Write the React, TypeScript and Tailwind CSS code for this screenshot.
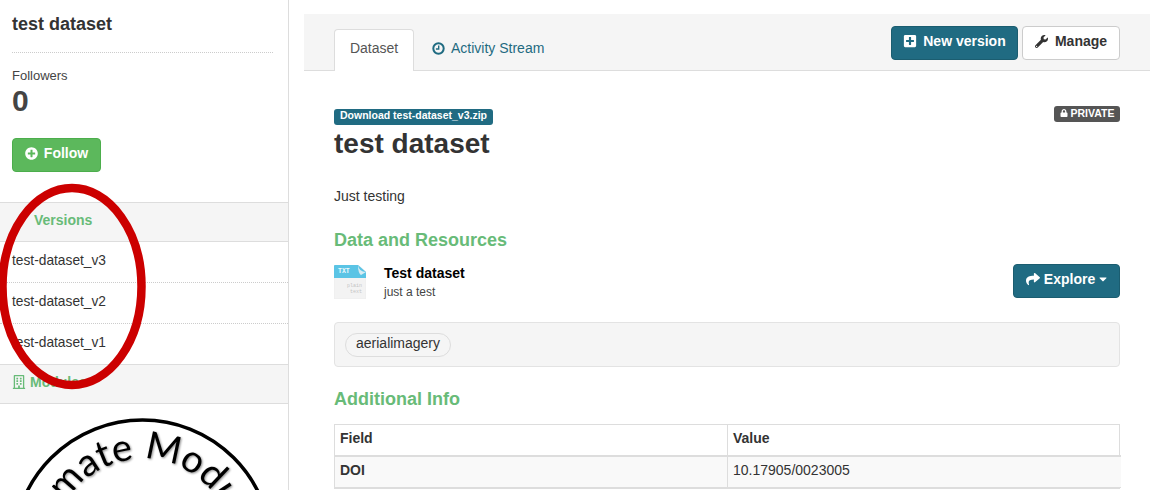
import { FaCaretDown, FaShare, FaWrench, FaPlusSquare, FaPlusCircle, FaLock, FaRegBuilding } from "react-icons/fa";

function ClockIcon() {
  return (
    <svg width="13" height="13" viewBox="0 0 13 13" fill="none" stroke="currentColor">
      <circle cx="6.5" cy="6.5" r="5.2" strokeWidth="2" />
      <path d="M6.7 3.4V7H3.9" strokeWidth="1.4" />
    </svg>
  );
}

export default function App() {
  return (
    <div className="relative h-[490px] w-[1158px] overflow-hidden bg-white font-['Liberation_Sans',sans-serif] text-[14px] leading-[20px] text-[#333]">
      <div className="flex h-full">
        <aside className="h-full w-[289px] shrink-0 overflow-hidden border-r border-[#dddddd]">
          <div className="px-3 pt-[13px]">
            <h2 className="text-[18px] leading-[22px] font-bold text-[#333]">test dataset</h2>
            <div className="mt-[17px] mr-[3px] border-b border-dotted border-[#cccccc]" />
            <div className="mt-[14px] text-[13px] leading-[17px] text-[#444]">Followers</div>
            <div className="text-[30px] leading-[33px] font-bold text-[#444]">0</div>
            <button className="mt-[21px] flex h-[34px] w-[89px] items-center justify-center gap-[6px] rounded-[4px] border border-[#4cae4c] bg-[#5cb85c] pb-1 text-[14px] font-bold text-white">
              <FaPlusCircle className="text-[13px]" />
              Follow
            </button>
          </div>
          <div className="mt-[30px] flex h-[40px] items-center border-y border-[#dddddd] bg-[#f5f5f5] pb-1 pl-[34px] font-bold text-[#68bb78]">Versions</div>
          <ul className="text-[13.75px] text-[#333]">
            <li className="flex h-[41px] items-center border-b border-dotted border-[#cccccc] pb-[2px] pl-3">test-dataset_v3</li>
            <li className="flex h-[41px] items-center border-b border-dotted border-[#cccccc] pb-[2px] pl-3">test-dataset_v2</li>
            <li className="flex h-[40px] items-center pb-[2px] pl-3">test-dataset_v1</li>
          </ul>
          <div className="flex h-[40px] items-center gap-[4px] border-y border-[#dddddd] bg-[#f5f5f5] pb-1 pl-3 font-bold text-[#68bb78]">
            <FaRegBuilding className="text-[14px]" />
            Modules
          </div>
          <svg viewBox="0 0 288 86" className="block h-[86px] w-[288px]">
            <defs>
              <path id="seal" d="M 52.5 145 A 90 90 0 0 1 232.5 145" />
            </defs>
            <circle cx="142.5" cy="145" r="129" fill="none" stroke="#000" strokeWidth="3.5" />
            <text fontSize="38" fontFamily="Lato, sans-serif" fill="#000" className="[filter:drop-shadow(1px_1px_1px_rgba(0,0,0,0.45))]">
              <textPath href="#seal" startOffset="2%">Climate Modules</textPath>
            </text>
          </svg>
        </aside>
        <main className="ml-[15px] w-[846px] shrink-0">
          <div className="mt-[14px] flex h-[57px] items-end justify-between border-b border-[#dddddd] bg-[#f5f5f5] px-[30px]">
            <div className="flex items-end">
              <div className="-mb-px flex h-[42px] w-[80px] items-center justify-center rounded-t-[4px] border border-b-0 border-[#dddddd] bg-white pb-[6px] text-[#555]">Dataset</div>
              <div className="flex h-[42px] items-center gap-[6px] pb-[2px] pl-[18px] text-[#1f6b81]">
                <ClockIcon />
                Activity Stream
              </div>
            </div>
            <div className="mb-[10px] flex gap-[4px]">
              <button className="flex h-[34px] w-[127px] items-center justify-center gap-[6px] rounded-[4px] border border-[#1b5d70] bg-[#206b82] pb-1 font-bold text-white">
                <FaPlusSquare className="text-[14px]" />
                New version
              </button>
              <button className="flex h-[34px] w-[98px] items-center justify-center gap-[7px] rounded-[4px] border border-[#cccccc] bg-white pb-1 font-bold text-[#333]">
                <FaWrench className="text-[13px]" />
                Manage
              </button>
            </div>
          </div>
          <div className="px-[30px]">
            <div className="mt-[35px] flex items-start justify-between">
              <span className="mt-[3px] rounded-[3px] bg-[#206b82] px-[6px] pb-[3px] text-[10.5px] leading-[13px] font-bold text-white">Download test-dataset_v3.zip</span>
              <span className="flex h-[16px] w-[66px] items-center justify-center gap-[3px] rounded-[3px] bg-[#555] pb-[2px] text-[10.5px] font-bold text-white">
                <FaLock className="text-[8px]" />
                PRIVATE
              </span>
            </div>
            <h1 className="mt-[3px] text-[28px] leading-[31px] font-bold text-[#333]">test dataset</h1>
            <p className="mt-[27px]">Just testing</p>
            <h3 className="mt-[24px] text-[18px] leading-[20px] font-bold text-[#68bb78]">Data and Resources</h3>
            <div className="mt-[15px] flex items-start justify-between">
              <div className="flex">
                <svg width="32" height="34" viewBox="0 0 32 34">
                  <path d="M0 1 Q0 0 1 0 H24 L32 7 V33 Q32 34 31 34 H1 Q0 34 0 33Z" fill="#f3f3f3" stroke="#e4e4e4" strokeWidth="0.5" />
                  <path d="M0 13 V1 Q0 0 1 0 H24 L32 7 V13Z" fill="#5bc4e5" />
                  <path d="M24 0 Q25 7 32 7 L27 10 Q24 8 24 0Z" fill="#d8ecf3" />
                  <text x="4" y="8" fontSize="6.5" fontWeight="700" fill="#eef9fc" fontFamily="'Liberation Mono', monospace">TXT</text>
                  <text x="28" y="22" textAnchor="end" fontSize="5" fill="#c4c4c4" fontFamily="'Liberation Mono', monospace">plain</text>
                  <text x="28" y="28" textAnchor="end" fontSize="5" fill="#c4c4c4" fontFamily="'Liberation Mono', monospace">text</text>
                </svg>
                <div className="ml-[18px]">
                  <div className="leading-[16px] font-bold text-black">Test dataset</div>
                  <div className="mt-[3px] text-[12px] leading-[17px] text-[#444]">just a test</div>
                </div>
              </div>
              <button className="-mt-[1px] flex h-[34px] w-[107px] items-center justify-center gap-[4px] rounded-[4px] border border-[#1b5d70] bg-[#206b82] pb-1 pl-[2px] font-bold text-white">
                <FaShare className="text-[14px]" />
                Explore
                <FaCaretDown className="-ml-[2px] text-[12px]" />
              </button>
            </div>
            <div className="mt-[21px] flex h-[45px] items-center rounded-[4px] border border-[#e3e3e3] bg-[#f5f5f5] px-[10px]">
              <span className="flex h-[24px] items-center rounded-[100px] border border-[#dddddd] px-[10px] pb-1 text-[#333]">aerialimagery</span>
            </div>
            <h3 className="mt-[22px] text-[18px] leading-[20px] font-bold text-[#68bb78]">Additional Info</h3>
            <div className="mt-[15px] grid grid-cols-[393px_393px] border border-[#dddddd]">
              <div className="flex h-[32px] items-center border-r border-b-2 border-[#dddddd] pb-1 pl-[5px] font-bold">Field</div>
              <div className="flex h-[32px] items-center border-b-2 border-[#dddddd] pb-1 pl-[5px] font-bold">Value</div>
              <div className="flex h-[31px] items-center border-r border-b border-[#dddddd] bg-[#f9f9f9] pb-1 pl-[5px] font-bold">DOI</div>
              <div className="flex h-[31px] items-center border-b border-[#dddddd] bg-[#f9f9f9] pb-1 pl-[5px]">10.17905/0023005</div>
            </div>
          </div>
        </main>
      </div>
      <svg className="pointer-events-none absolute top-0 left-0" width="160" height="400" viewBox="0 0 160 400">
        <ellipse cx="72" cy="286.5" rx="69.5" ry="98.5" fill="none" stroke="#cc0000" strokeWidth="8.5" />
      </svg>
    </div>
  );
}
